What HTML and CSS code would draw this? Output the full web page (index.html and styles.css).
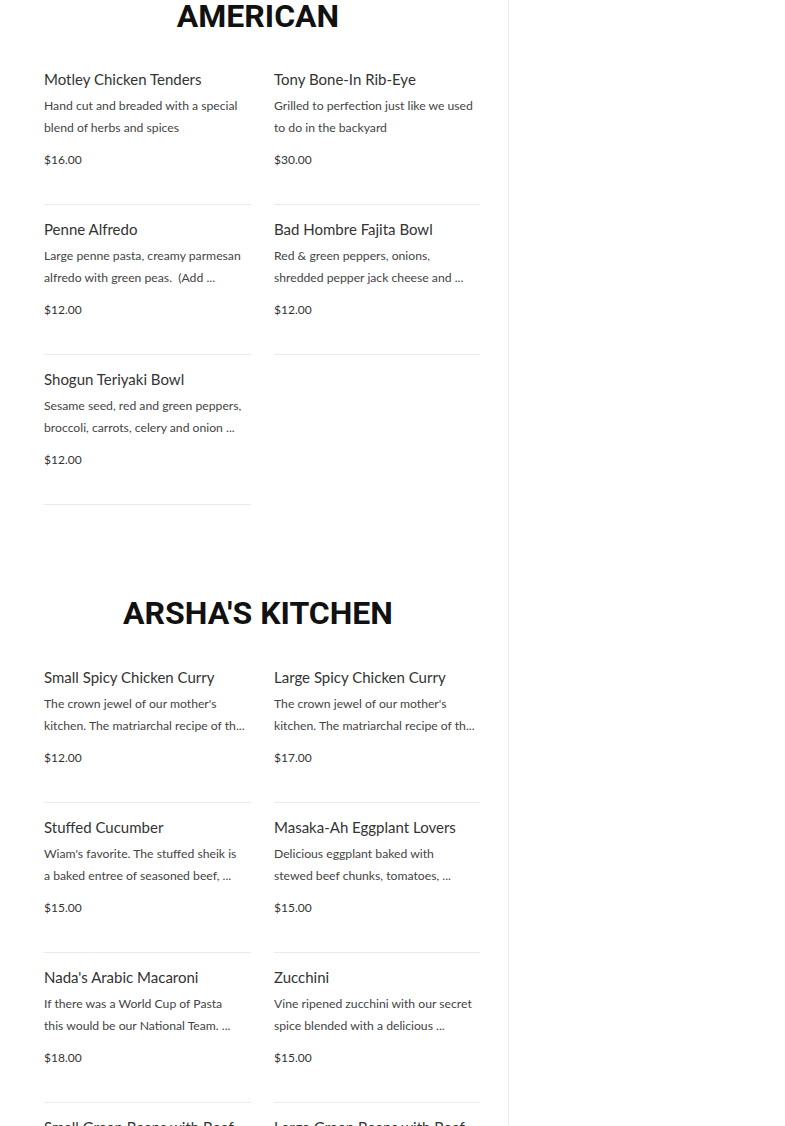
FILE: index.html
```html
<!DOCTYPE html>
<html lang="en">
<head>
<meta charset="utf-8">
<title>Menu</title>
<link rel="stylesheet" href="styles.css">
</head>
<body>
<div class="layout">
  <main class="menu-panel">
    <section class="category">
      <h2 class="category-title">AMERICAN</h2>
      <div class="items">
        <article class="item">
          <h3 class="item-name">Motley Chicken Tenders</h3>
          <p class="item-desc">Hand cut and breaded with a special blend of herbs and spices</p>
          <div class="item-price">$16.00</div>
        </article>
        <article class="item">
          <h3 class="item-name">Tony Bone-In Rib-Eye</h3>
          <p class="item-desc">Grilled to perfection just like we used to do in the backyard</p>
          <div class="item-price">$30.00</div>
        </article>
        <article class="item">
          <h3 class="item-name">Penne Alfredo</h3>
          <p class="item-desc">Large penne pasta, creamy parmesan alfredo with green peas.&nbsp; (Add ...</p>
          <div class="item-price">$12.00</div>
        </article>
        <article class="item">
          <h3 class="item-name">Bad Hombre Fajita Bowl</h3>
          <p class="item-desc">Red &amp; green peppers, onions, shredded pepper jack cheese and ...</p>
          <div class="item-price">$12.00</div>
        </article>
        <article class="item">
          <h3 class="item-name">Shogun Teriyaki Bowl</h3>
          <p class="item-desc">Sesame seed, red and green peppers, broccoli, carrots, celery and onion ...</p>
          <div class="item-price">$12.00</div>
        </article>
      </div>
    </section>

    <section class="category">
      <h2 class="category-title">ARSHA'S KITCHEN</h2>
      <div class="items">
        <article class="item">
          <h3 class="item-name">Small Spicy Chicken Curry</h3>
          <p class="item-desc">The crown jewel of our mother's kitchen. The matriarchal recipe of th...</p>
          <div class="item-price">$12.00</div>
        </article>
        <article class="item">
          <h3 class="item-name">Large Spicy Chicken Curry</h3>
          <p class="item-desc">The crown jewel of our mother's kitchen. The matriarchal recipe of th...</p>
          <div class="item-price">$17.00</div>
        </article>
        <article class="item">
          <h3 class="item-name">Stuffed Cucumber</h3>
          <p class="item-desc">Wiam's favorite. The stuffed sheik is a baked entree of seasoned beef, ...</p>
          <div class="item-price">$15.00</div>
        </article>
        <article class="item">
          <h3 class="item-name">Masaka-Ah Eggplant Lovers</h3>
          <p class="item-desc">Delicious eggplant baked with stewed beef chunks, tomatoes, ...</p>
          <div class="item-price">$15.00</div>
        </article>
        <article class="item">
          <h3 class="item-name">Nada's Arabic Macaroni</h3>
          <p class="item-desc">If there was a World Cup of Pasta<br>this would be our National Team. ...</p>
          <div class="item-price">$18.00</div>
        </article>
        <article class="item">
          <h3 class="item-name">Zucchini</h3>
          <p class="item-desc">Vine ripened zucchini with our secret spice blended with a delicious ...</p>
          <div class="item-price">$15.00</div>
        </article>
        <article class="item">
          <h3 class="item-name">Small Green Beans with Beef</h3>
          <p class="item-desc">Fresh green beans stewed with tender beef in a tomato sauce ...</p>
          <div class="item-price">$12.00</div>
        </article>
        <article class="item">
          <h3 class="item-name">Large Green Beans with Beef</h3>
          <p class="item-desc">Fresh green beans stewed with tender beef in a tomato sauce ...</p>
          <div class="item-price">$17.00</div>
        </article>
      </div>
    </section>
  </main>
  <aside class="side-panel"></aside>
</div>
</body>
</html>
```

FILE: styles.css
```css
html, body {
  margin: 0;
  padding: 0;
  background: #ffffff;
}

body {
  font-family: "Lato", "Noto Sans", sans-serif;
  color: #333333;
  overflow: hidden;
  height: 1126px;
}

.layout {
  display: flex;
  min-height: 1126px;
}

.menu-panel {
  width: 436px;
  padding: 0 28px 0 44px;
  border-right: 1px solid #ececec;
  box-sizing: content-box;
  flex: none;
}

.side-panel {
  flex: 1;
}

.category {
  padding-bottom: 92px;
}

.category-title {
  margin: 0 0 23px;
  padding-right: 8px;
  font-family: "Roboto", "Lato", sans-serif;
  font-weight: 700;
  font-size: 32px;
  line-height: 32px;
  text-align: center;
  color: #111111;
}

.category + .category .category-title {
  margin-bottom: 24px;
}

.items {
  display: grid;
  grid-template-columns: 207px 206px;
  column-gap: 23px;
}

.item {
  padding: 14px 0 35px;
  border-bottom: 1px solid #ebebeb;
}

.item-name {
  margin: 0;
  font-size: 15px;
  font-weight: 400;
  line-height: 20px;
  color: #333333;
  white-space: nowrap;
}

.item-desc {
  margin: 6px 0 0;
  width: 201px;
  font-size: 12.2px;
  line-height: 22px;
  color: #444444;
  height: 44px;
  overflow: hidden;
  display: -webkit-box;
  -webkit-line-clamp: 2;
  -webkit-box-orient: vertical;
}

.item-price {
  margin-top: 11px;
  font-size: 12px;
  line-height: 20px;
  color: #333333;
}

.item {
  padding-bottom: 34px;
}
```
